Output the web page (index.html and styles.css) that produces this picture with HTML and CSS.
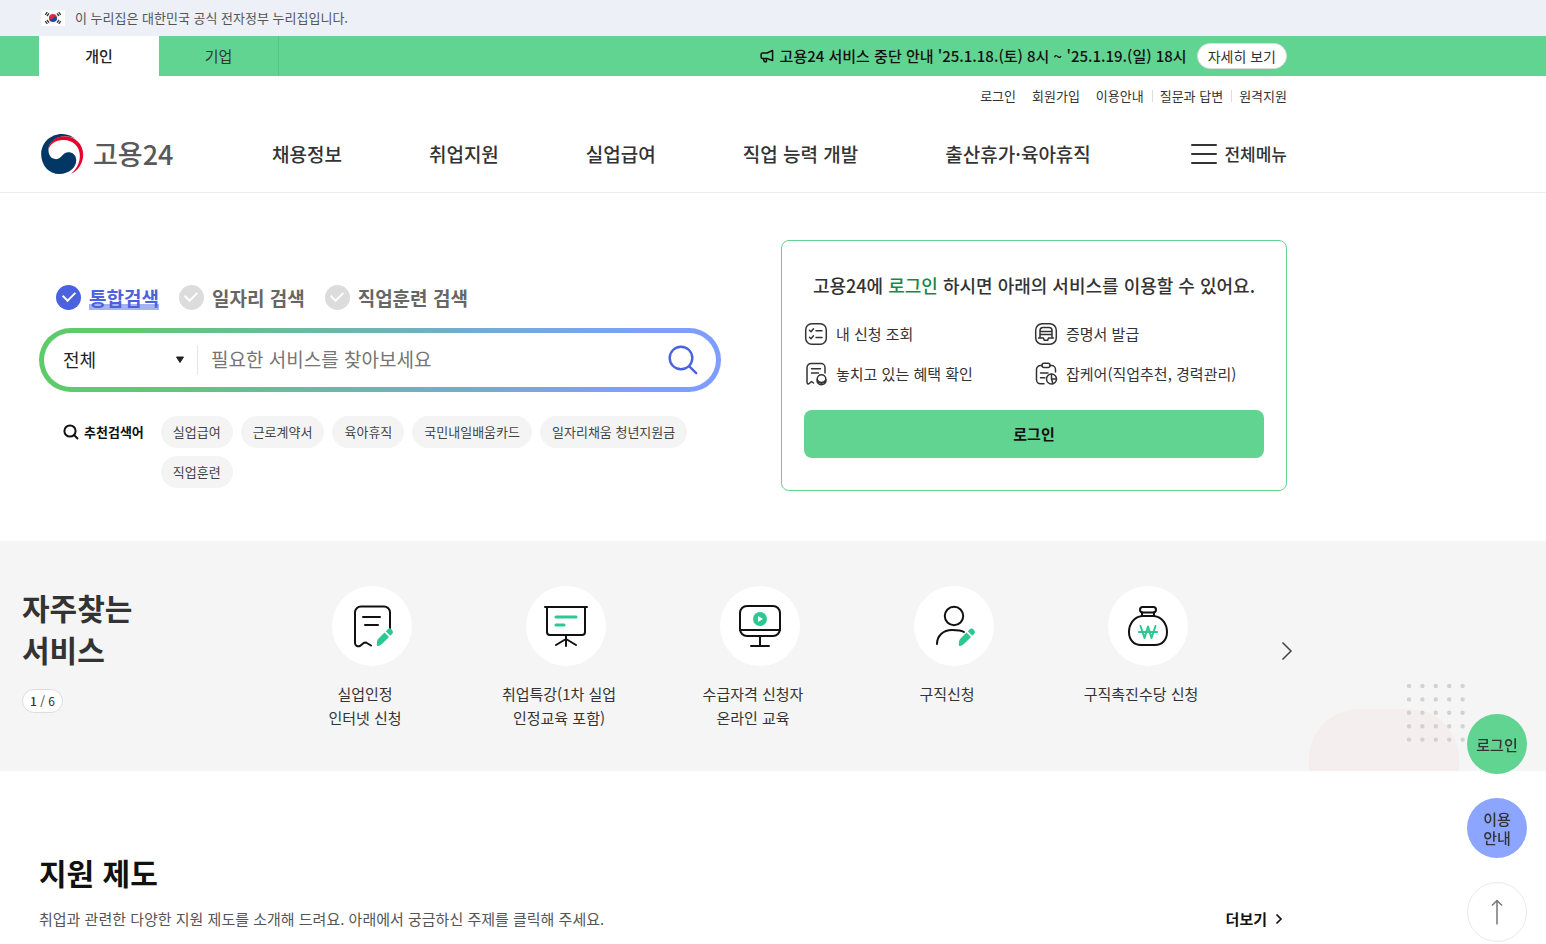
FILE: index.html
```html
<!DOCTYPE html>
<html lang="ko">
<head>
<meta charset="utf-8">
<meta name="viewport" content="width=device-width, initial-scale=1">
<title>고용24</title>
<link rel="stylesheet" href="styles.css">
</head>
<body>
<div class="gov-bar">
  <div class="container gov-inner">
    <svg class="flag" viewBox="0 0 24 16" aria-hidden="true">
      <rect width="24" height="16" fill="#fff"/>
      <path d="M8 8a4 4 0 0 1 8 0z" fill="#d4303c"/>
      <path d="M8 8a4 4 0 0 0 8 0z" fill="#1c4aa0"/>
      <circle cx="10" cy="7.600" r="1.900" fill="#d4303c"/><circle cx="14" cy="8.400" r="1.900" fill="#1c4aa0"/>
      <path d="M4.300 4.800l2-2.600M6 6l2-2.600M17.700 2.200l2 2.600M16 3.400l2 2.600M4.300 11.200l2 2.600M6 10l2 2.600M17.700 13.800l2-2.600M16 12.600l2-2.600" stroke="#333" stroke-width="1.300"/>
    </svg>
    <p>이 누리집은 대한민국 공식 전자정부 누리집입니다.</p>
  </div>
</div>

<div class="member-bar">
  <div class="container member-inner">
    <nav class="member-tabs" aria-label="회원 구분">
      <a class="member-tab is-active" href="#">개인</a>
      <a class="member-tab" href="#">기업</a>
    </nav>
    <div class="notice">
      <svg class="horn" viewBox="0 0 14 14" fill="none" stroke="#111" stroke-width="1.500" stroke-linejoin="round" aria-hidden="true">
        <path d="M12.600 1.500v10L7 9.500H2.600a1.500 1.500 0 0 1-1.500-1.500V5.500A1.500 1.500 0 0 1 2.600 4H7z"/><path d="M3.200 9.500l1.200 3.300h2V9.500"/>
      </svg>
      <strong>고용24 서비스 중단 안내 '25.1.18.(토) 8시 ~ '25.1.19.(일) 18시</strong>
      <a class="notice-more" href="#">자세히 보기</a>
    </div>
  </div>
</div>

<header class="header">
  <div class="container">
    <ul class="utility">
      <li><a href="#">로그인</a></li>
      <li><a href="#">회원가입</a></li>
      <li><a href="#">이용안내</a></li>
      <li class="divided"><a href="#">질문과 답변</a></li>
      <li class="divided"><a href="#">원격지원</a></li>
    </ul>
    <div class="gnb">
      <a class="logo" href="#">
        <svg class="logo-mark" viewBox="120 399 132 127" aria-hidden="true">
          <path fill="#003764" d="M230 421C218 408 203 402 186 402C151 402 123 429 123 463C123 497 147 523 178 523C207 523 230 504 229 480C228 465 218 457 205 457C188 457 186 477 168 478C152 478 145 465 145 450C146 425 170 409 195 409C208 409 220 412 230 421Z"/>
          <path fill="#e4032e" d="M145 450C146 425 168 409 192 409C225 409 250 432 250 464C250 490 235 513 213 523C230 508 240 490 240 468C240 440 220 420 190 420C165 420 148 435 145 450Z"/>
        </svg>
        <span>고용24</span>
      </a>
      <nav class="main-nav" aria-label="주 메뉴">
        <a href="#">채용정보</a>
        <a href="#">취업지원</a>
        <a href="#">실업급여</a>
        <a href="#">직업 능력 개발</a>
        <a href="#">출산휴가·육아휴직</a>
      </nav>
      <button class="all-menu" type="button">
        <svg viewBox="0 0 28 20" stroke="#333" stroke-width="2" stroke-linecap="round" aria-hidden="true"><path d="M2 1h24M2 10h24M2 19h24"/></svg>
        전체메뉴
      </button>
    </div>
  </div>
</header>

<main>
  <section class="container hero">
    <form class="search">
      <div class="search-types">
        <label class="search-type"><input type="radio" name="type" checked><span>통합검색</span></label>
        <label class="search-type"><input type="radio" name="type"><span>일자리 검색</span></label>
        <label class="search-type"><input type="radio" name="type"><span>직업훈련 검색</span></label>
      </div>
      <div class="search-box">
        <div class="scope">
          <select aria-label="검색 범위"><option>전체</option></select>
          <svg viewBox="0 0 10 8" aria-hidden="true"><path d="M1.500 1h7L5 6.500z" fill="#222" stroke="#222" stroke-linejoin="round"/></svg>
        </div>
        <input class="query" type="text" aria-label="검색어" placeholder="필요한 서비스를 찾아보세요">
        <button class="search-btn" type="button" aria-label="검색">
          <svg viewBox="0 0 30 30" fill="none" stroke="#4b62e0" stroke-width="2.400" stroke-linecap="round"><circle cx="13" cy="13" r="11.300"/><path d="M21.300 21.300l6.900 6.900"/></svg>
        </button>
      </div>
      <div class="keywords">
        <strong class="keywords-title">
          <svg viewBox="0 0 16 16" fill="none" stroke="#111" stroke-width="2" aria-hidden="true"><circle cx="7" cy="7" r="5.600"/><path d="M11 11l4 4"/></svg>
          추천검색어
        </strong>
        <ul class="chips">
          <li><a href="#">실업급여</a></li>
          <li><a href="#">근로계약서</a></li>
          <li><a href="#">육아휴직</a></li>
          <li><a href="#">국민내일배움카드</a></li>
          <li><a href="#">일자리채움 청년지원금</a></li>
          <li><a href="#">직업훈련</a></li>
        </ul>
      </div>
    </form>

    <aside class="login-card">
      <h2>고용24에 <em>로그인</em> 하시면 아래의 서비스를 이용할 수 있어요.</h2>
      <ul class="benefits">
        <li>
          <svg viewBox="0 0 24 24" aria-hidden="true"><rect x="1.700" y="1.700" width="20.600" height="20.600" rx="6"/><path d="M5.500 8.300l1.500 1.400 2.500-2.900M5.500 15.300l1.500 1.400 2.500-2.900M12 8.700h6M12 15.500h6"/></svg>
          내 신청 조회
        </li>
        <li>
          <svg viewBox="0 0 24 24" aria-hidden="true"><rect x="1.700" y="1.700" width="20.600" height="20.600" rx="6.500"/><path d="M6 15.500V8.500a3 3 0 0 1 3-3h6a3 3 0 0 1 3 3v7M6 9.500h12M6 12.500h12M4.500 16h5l.8 2.300h3.400l.8-2.300h5"/></svg>
          증명서 발급
        </li>
        <li>
          <svg viewBox="0 0 24 24" aria-hidden="true"><path d="M9.500 21l-2-1.500-2 1.800c-1.500 1.300-2.500.5-2.500-1.300V5.500a4 4 0 0 1 4-4h10a4 4 0 0 1 4 4V11M7.500 6.800h9M7.500 11h7"/><circle cx="17.500" cy="17" r="4.300"/><path d="M13.200 17.500V20c1.500 3.500 7 3.500 8.600 0v-2.500M13.500 18.500c1.800 2.500 6.200 2.500 8 0"/></svg>
          놓치고 있는 혜택 확인
        </li>
        <li>
          <svg viewBox="0 0 24 24" aria-hidden="true"><rect x="8" y="1.200" width="8" height="4.200" rx="2"/><path d="M8 3.500H6.500a4 4 0 0 0-4 4v10.300a4 4 0 0 0 4 4H10M16 3.500h1.500a4 4 0 0 1 4 4V10M6.500 11H14M6.500 15.800h4.300"/><circle cx="17.500" cy="17" r="5"/><path d="M17.500 12v5h5M17.500 17l1.500 4.800"/></svg>
          잡케어(직업추천, 경력관리)
        </li>
      </ul>
      <button class="login-btn" type="button">로그인</button>
    </aside>
  </section>

  <section class="services">
    <svg class="services-decor" viewBox="0 0 160 90" aria-hidden="true">
      <path d="M0 90V78A50 50 0 0 1 50 28h50a50 50 0 0 1 50 50V90z" fill="#f4eeee"/>
      <path d="M100 5h54M100 18.400h54M100 31.800h54M100 45.200h54M100 58.600h54" stroke="#d3d1d1" stroke-width="4.400" stroke-linecap="round" stroke-dasharray="0 13.400"/>
    </svg>
    <div class="services-inner">
      <div class="services-head">
        <h2>자주찾는<br>서비스</h2>
        <span class="pager"><b>1</b> / 6</span>
      </div>
      <ul class="service-list">
        <li><a href="#">
          <span class="service-icon"><svg viewBox="0 0 48 48"><path d="M23 43.500l-5-3-2 .2-4 3.300c-2.500 1-5-.5-5-3V10.500a6 6 0 0 1 6-6h23a6 6 0 0 1 6 6V26M15 15h17M17 23h13"/><g class="pencil"><path d="M29 44c-.500-4 0-6 2-8l5.500-5.500 4.500 4.500-5.500 5.500c-2 2-3.500 3.300-6.500 3.500zM37.800 29.200l1.500-1.500a3 3 0 0 1 4.500 4.500L42.300 33.700z"/></g></svg></span>
          <span class="service-name">실업인정<br>인터넷 신청</span></a></li>
        <li><a href="#">
          <span class="service-icon"><svg viewBox="0 0 48 48"><path d="M3 5h42M5 5v25a3 3 0 0 0 3 3h32a3 3 0 0 0 3-3V5M24 33v11M24 37l-10 6M24 37l10 6"/><path class="accent-line" d="M14 15h20M14 23h8"/></svg></span>
          <span class="service-name">취업특강(1차 실업<br>인정교육 포함)</span></a></li>
        <li><a href="#">
          <span class="service-icon"><svg viewBox="0 0 48 48"><rect x="4" y="4" width="40" height="30" rx="7"/><path d="M4 28h40M24 34v10M15 44h18"/><circle class="accent-fill" cx="24" cy="17" r="7"/><path class="play" d="M22 14v6l5-3z"/></svg></span>
          <span class="service-name">수급자격 신청자<br>온라인 교육</span></a></li>
        <li><a href="#">
          <span class="service-icon"><svg viewBox="0 0 48 48"><circle cx="24" cy="14" r="9.200"/><path d="M7 42C7 34 13 28 22 28c5 0 9 0 12 2"/><g class="pencil"><path d="M29 44c-.500-4 0-6 2-8l5.500-5.500 4.500 4.500-5.500 5.500c-2 2-3.500 3.300-6.500 3.500zM37.800 29.200l1.500-1.500a3 3 0 0 1 4.500 4.500L42.300 33.700z"/></g></svg></span>
          <span class="service-name">구직신청</span></a></li>
        <li><a href="#">
          <span class="service-icon"><svg viewBox="0 0 48 48"><rect x="16" y="5" width="16" height="5.500" rx="2.700"/><path d="M18 10.500v3.500M30 10.500v3.500M18 14h12M18 14C10 15 5 22 5 30c0 8 5 13 12 13h14c7 0 12-5 12-13 0-8-5-15-13-16"/><path class="accent-line won" d="M16.500 24l4 12 3.500-11.500 3.500 11.500 4-12M15 30h18"/></svg></span>
          <span class="service-name">구직촉진수당 신청</span></a></li>
      </ul>
      <button class="next" type="button" aria-label="다음">
        <svg viewBox="0 0 12 20" fill="none" stroke="#444" stroke-width="1.500"><path d="M1.500 1.500L10 10l-8.500 8.500"/></svg>
      </button>
    </div>
  </section>

  <section class="container support">
    <h2>지원 제도</h2>
    <div class="support-row">
      <p>취업과 관련한 다양한 지원 제도를 소개해 드려요. 아래에서 궁금하신 주제를 클릭해 주세요.</p>
      <a class="more" href="#">더보기
        <svg viewBox="0 0 8 12" fill="none" stroke="#111" stroke-width="1.700" aria-hidden="true"><path d="M1.500 1.500L6 6l-4.500 4.500"/></svg>
      </a>
    </div>
  </section>
</main>

<div class="quick">
  <a class="quick-login" href="#">로그인</a>
  <a class="quick-guide" href="#">이용<br>안내</a>
  <a class="quick-top" href="#" aria-label="맨 위로">
    <svg viewBox="0 0 12 26" fill="none" stroke="#777" stroke-width="1.500"><path d="M6 25.500V1.500M1 6.500l5-5 5 5"/></svg>
  </a>
</div>
</body>
</html>
```
FILE: styles.css
```css
* { box-sizing: border-box; }

body {
  margin: 0;
  background: #fff;
  color: #333;
  font-family: "Noto Sans CJK KR", "Noto Sans", sans-serif;
  font-size: 15px;
  line-height: 24px;
  overflow: hidden;
}

h2, p, ul { margin: 0; padding: 0; }
ul { list-style: none; }
a { color: inherit; text-decoration: none; }
button, input, select { font: inherit; color: inherit; }
button { border: 0; padding: 0; background: none; cursor: pointer; }
svg { display: block; flex: none; }

.container {
  max-width: 1248px;
  margin-left: 39px;
  margin-right: 39px;
}

/* Government banner */
.gov-bar { background: #edf0f6; }
.gov-inner {
  display: flex;
  align-items: center;
  gap: 10px;
  height: 36px;
  padding-left: 2px;
  color: #555;
  font-size: 13px;
}
.flag { width: 24px; height: 16px; }

/* Member bar */
.member-bar { background: #62d491; }
.member-inner {
  display: flex;
  justify-content: space-between;
  height: 40px;
}
.member-tabs { display: flex; }
.member-tab {
  display: flex;
  align-items: center;
  justify-content: center;
  width: 120px;
  border-right: 1px solid #56c585;
}
.member-tab.is-active {
  border: 0;
  background: #fff;
  color: #222;
  font-weight: 500;
}
.notice { display: flex; align-items: center; gap: 6px; color: #111; }
.notice strong { font-weight: 500; }
.horn { width: 14px; height: 14px; }
.notice-more {
  margin-left: 4px;
  padding: 0 10px;
  border: 1px solid #ddd;
  border-radius: 13px;
  background: #fff;
  color: #333;
  font-size: 14px;
}

/* Header */
.header { border-bottom: 1px solid #eee; }
.utility {
  display: flex;
  justify-content: flex-end;
  gap: 16px;
  padding-top: 8px;
  font-size: 13px;
}
.divided { position: relative; }
.divided::before {
  content: "";
  position: absolute;
  left: -8px;
  top: 6px;
  height: 12px;
  border-left: 1px solid #ddd;
}
.gnb {
  display: flex;
  align-items: center;
  height: 84px;
  padding-top: 8px;
}
.logo {
  display: flex;
  align-items: center;
  gap: 9px;
  width: 233px;
  padding-left: 1px;
  color: #58595b;
  font-size: 27px;
  font-weight: 500;
}
.logo-mark { width: 44px; height: 42px; }
.main-nav {
  display: flex;
  gap: 87px;
  font-size: 19px;
  font-weight: 500;
  white-space: nowrap;
}
.all-menu {
  display: flex;
  align-items: center;
  gap: 6px;
  margin-left: auto;
  font-size: 17px;
  font-weight: 500;
  white-space: nowrap;
}
.all-menu svg { width: 28px; height: 20px; }

/* Hero */
.hero {
  display: grid;
  grid-template-columns: minmax(0, 682fr) minmax(0, 506fr);
  gap: 60px;
  padding: 47px 0 50px;
}
.search { padding-top: 44px; }
.search-types {
  display: flex;
  gap: 20px;
  padding-left: 17px;
  color: #666;
  font-size: 19px;
  font-weight: 700;
}
.search-type { display: flex; align-items: center; gap: 8px; height: 26px; }
.search-type input {
  appearance: none;
  display: flex;
  align-items: center;
  justify-content: center;
  width: 25px;
  height: 25px;
  margin: 0;
  border-radius: 50%;
  background: #dcdcdc;
}
.search-type input::before {
  content: "";
  width: 6px;
  height: 10px;
  margin-bottom: 4px;
  border: solid #fff;
  border-width: 0 2px 2px 0;
  transform: rotate(45deg);
}
.search-type input:checked { background: #4b62e0; }
.search-type span { padding-top: 2px; }
.search-type input:checked + span {
  background: linear-gradient(#a7b2f0, #a7b2f0) 0 100% / 100% 6px no-repeat;
  color: #4b62e0;
}
.search-box {
  display: flex;
  align-items: center;
  height: 64px;
  margin-top: 18px;
  padding: 0 18px 0 19px;
  border: 5px solid transparent;
  border-radius: 32px;
  background:
    linear-gradient(#fff, #fff) padding-box,
    linear-gradient(90deg, #5fca6b 10%, #7f9dff 90%) border-box;
}
.scope {
  position: relative;
  width: 135px;
  border-right: 1px solid #e5e5e5;
}
.scope select {
  appearance: none;
  display: block;
  width: 100%;
  height: 30px;
  padding: 0 0 3px;
  border: 0;
  background: none;
  color: #222;
  font-size: 18px;
}
.scope svg {
  position: absolute;
  right: 12px;
  top: 11px;
  width: 10px;
  height: 8px;
  pointer-events: none;
}
.query {
  flex: 1;
  min-width: 0;
  height: 40px;
  padding: 0 13px 3px;
  border: 0;
  outline: 0;
  background: none;
  font-size: 19px;
}
.query::placeholder { color: #757575; opacity: 1; }
.search-btn svg { width: 30px; height: 30px; }
.keywords {
  display: flex;
  gap: 17px;
  margin-top: 24px;
  padding-left: 24px;
  font-size: 13px;
}
.keywords-title {
  display: flex;
  flex: none;
  align-items: center;
  gap: 5px;
  height: 32px;
  color: #111;
  font-weight: 700;
}
.keywords-title svg { width: 16px; height: 16px; }
.chips { display: flex; flex-wrap: wrap; gap: 8px; }
.chips a {
  display: block;
  padding: 4px 12px;
  border-radius: 16px;
  background: #f4f4f4;
  color: #444;
}

/* Login card */
.login-card {
  padding: 32px 22px;
  border: 1px solid #62d491;
  border-radius: 8px;
}
.login-card h2 {
  font-size: 18px;
  font-weight: 500;
  text-align: center;
  white-space: nowrap;
}
.login-card em { color: #128a4a; font-style: normal; }
.benefits {
  display: grid;
  grid-template-columns: 1fr 1fr;
  row-gap: 16px;
  margin-top: 25px;
}
.benefits li { display: flex; align-items: center; gap: 8px; white-space: nowrap; }
.benefits svg {
  width: 24px;
  height: 24px;
  fill: none;
  stroke: #333;
  stroke-width: 1.5;
  stroke-linecap: round;
  stroke-linejoin: round;
}
.login-btn {
  display: block;
  width: 100%;
  height: 48px;
  margin-top: 24px;
  border-radius: 8px;
  background: #62d491;
  color: #111;
  font-weight: 700;
}

/* Frequently used services */
.services { position: relative; background: #f5f5f5; }
.services-decor {
  position: absolute;
  right: 77px;
  bottom: 0;
  width: 160px;
  height: 90px;
}
.services-inner {
  position: relative;
  display: flex;
  max-width: 1293px;
  height: 230px;
  padding: 45px 0 0 22px;
}
.services-head { width: 270px; }
.services-head h2 {
  font-size: 30px;
  font-weight: 700;
  line-height: 42px;
}
.pager {
  display: inline-block;
  margin-top: 19px;
  padding: 0 7px;
  border: 1px solid #ddd;
  border-radius: 12px;
  background: #fff;
  font-size: 12px;
  line-height: 22px;
}
.pager b { font-weight: 500; }
.service-list { display: flex; flex: 1; max-width: 970px; }
.service-list li { flex: 1; padding-right: 48px; }
.service-list a { display: block; text-align: center; }
.service-icon {
  display: flex;
  align-items: center;
  justify-content: center;
  width: 80px;
  height: 80px;
  margin-left: 40px;
  border-radius: 50%;
  background: #fff;
}
.service-icon svg {
  width: 48px;
  height: 48px;
  fill: none;
  stroke: #111;
  stroke-width: 2;
  stroke-linecap: round;
  stroke-linejoin: round;
}
.service-icon .pencil, .service-icon .accent-fill { fill: #2bc891; stroke: none; }
.service-icon .accent-line { stroke: #2bc891; stroke-width: 3; }
.service-icon .won { stroke-width: 2; }
.service-icon .play { fill: #fff; stroke: none; }
.service-name { display: block; margin-top: 16px; white-space: nowrap; }
.next { align-self: flex-start; margin: 55px 0 0 auto; }
.next svg { width: 12px; height: 20px; }

/* Support programmes */
.support { padding-top: 80px; }
.support h2 {
  color: #111;
  font-size: 30px;
  font-weight: 700;
  line-height: 42px;
}
.support-row {
  display: flex;
  justify-content: space-between;
  margin-top: 14px;
  color: #555;
}
.more {
  display: flex;
  align-items: center;
  gap: 8px;
  padding-right: 4px;
  color: #111;
  font-weight: 700;
}
.more svg { width: 8px; height: 12px; }

/* Floating shortcuts */
.quick {
  position: fixed;
  right: 19px;
  bottom: 2px;
  display: flex;
  flex-direction: column;
  gap: 24px;
  font-weight: 500;
  line-height: 19px;
  text-align: center;
}
.quick a {
  display: flex;
  align-items: center;
  justify-content: center;
  width: 60px;
  height: 60px;
  border-radius: 50%;
}
.quick-login { background: #62d491; }
.quick-guide { background: #8ca6ff; }
.quick-top { border: 1px solid #e8e8e8; background: #fff; }
.quick-top svg { width: 12px; height: 26px; }
```
